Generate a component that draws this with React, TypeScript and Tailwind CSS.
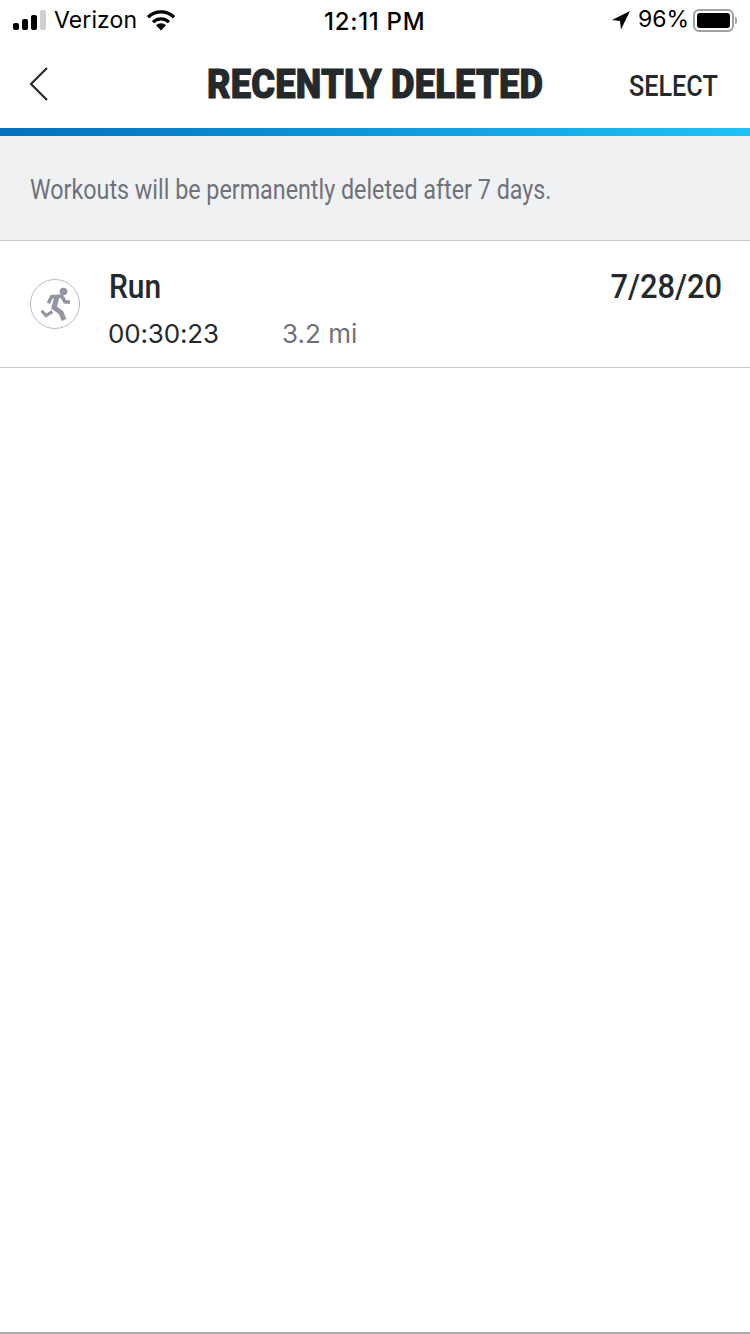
import React from 'react';

const StatusBar: React.FC = () => (
  <div className="h-[40px] flex items-center justify-between text-black font-['Inter',sans-serif] text-[23px] relative">
    <div className="flex items-center pl-[13px]">
      <div className="flex items-end gap-[3px] h-[20px]">
        <span className="w-[6px] h-[7px] rounded-[2px] bg-black" />
        <span className="w-[6px] h-[11px] rounded-[2px] bg-black" />
        <span className="w-[6px] h-[15px] rounded-[2px] bg-black" />
        <span className="w-[6px] h-[20px] rounded-[2px] bg-[#cfcfcf]" />
      </div>
      <span className="ml-[8px] tracking-[0.1px]">Verizon</span>
      <svg className="ml-[9px]" width="30" height="22" viewBox="0 0 30 22">
        <path d="M15 21.5l-5-5.2a7 7 0 0 1 10 0z" fill="#000" />
        <path d="M7 13.2a11.3 11.3 0 0 1 16 0" fill="none" stroke="#000" strokeWidth="3.2" />
        <path d="M2 8.2a18.6 18.6 0 0 1 26 0" fill="none" stroke="#000" strokeWidth="3.4" />
      </svg>
    </div>
    <span className="absolute left-[324px] top-[4px] font-medium text-[24px] tracking-[0.7px]">12:11 PM</span>
    <div className="flex items-center pr-[13px]">
      <svg width="20" height="20" viewBox="0 0 20 20">
        <path d="M19 1 1 10l8 1 1 8.5z" fill="#000" />
      </svg>
      <span className="ml-[7px] -mt-[1px]">96%</span>
      <div className="ml-[4px] w-[41px] h-[23px] rounded-[6px] border-2 border-[#a0a0a0] p-[2px]">
        <div className="w-full h-full rounded-[3px] bg-black" />
      </div>
      <span className="ml-[1px] w-[2px] h-[7px] rounded-r-[2px] bg-[#a0a0a0]" />
    </div>
  </div>
);

export default function App() {
  return (
    <div className="w-[750px] h-[1334px] bg-white flex flex-col border-b-2 border-[#ababab] overflow-hidden">
      <StatusBar />

      <div className="h-[88px] flex items-center justify-between relative">
        <svg className="ml-[29px]" width="20" height="36" viewBox="0 0 20 36">
          <path d="M18 2 2 18l16 16" fill="none" stroke="#24292c" strokeWidth="2.2" />
        </svg>
        <h1 className="absolute left-[207px] top-[22px] origin-left scale-x-[0.885] whitespace-nowrap font-['Roboto',sans-serif] font-black text-[41px] leading-[44px] tracking-[0.2px] [-webkit-text-stroke:1px_#24292c] text-[#24292c]">
          RECENTLY DELETED
        </h1>
        <span className="absolute left-[629px] top-[28px] origin-left scale-x-[0.84] whitespace-nowrap font-['Roboto',sans-serif] font-medium text-[30px] leading-[36px] text-[#24292c]">
          SELECT
        </span>
      </div>

      <div className="h-[8px] bg-gradient-to-r from-[#0670bd] to-[#20c2f8]" />

      <div className="h-[105px] bg-[#f0f1f3] border-b border-[#c8c8ca] flex items-center px-[30px] pt-[3px]">
        <span className="origin-left scale-x-[0.832] whitespace-nowrap font-['Roboto',sans-serif] text-[28px] text-[#6f727b]">
          Workouts will be permanently deleted after 7 days.
        </span>
      </div>

      <div className="h-[127px] border-b border-[#c8c8ca] flex relative">
        <div className="ml-[30px] mt-[38px] w-[50px] h-[50px] shrink-0 rounded-full border border-[#b9bbc2]">
          <svg width="48" height="48" viewBox="1 1 48 48">
            <circle cx="33.5" cy="12.5" r="3.8" fill="#9396a0" />
            <path d="M18.3 24.3 21.7 17.7 31.7 17 35 22.7 40 23.3" fill="none" stroke="#9396a0" strokeWidth="3.6" />
            <path d="M27 18 24 28.5 31 33.5 34 41" fill="none" stroke="#9396a0" strokeWidth="5" />
            <path d="M11.7 31.7 16 36.7 22.3 32.7" fill="none" stroke="#9396a0" strokeWidth="3.2" />
          </svg>
        </div>
        <div className="ml-[29px] flex flex-col">
          <span className="mt-[25px] origin-left scale-x-[0.88] font-['Roboto',sans-serif] font-medium text-[34px] leading-[40px] text-[#24292c]">
            Run
          </span>
          <div className="mt-[12px] -ml-[1px] flex font-['Inter',sans-serif] text-[26px] leading-[32px]">
            <span className="w-[174px] tracking-[-0.15px] text-[#24292c]">00:30:23</span>
            <span className="text-[#6f727b]">3.2 mi</span>
          </div>
        </div>
        <span className="ml-auto mr-[28px] mt-[25px] origin-right scale-x-[0.907] font-['Roboto',sans-serif] font-medium text-[34px] leading-[40px] text-[#24292c]">
          7/28/20
        </span>
      </div>
    </div>
  );
}
